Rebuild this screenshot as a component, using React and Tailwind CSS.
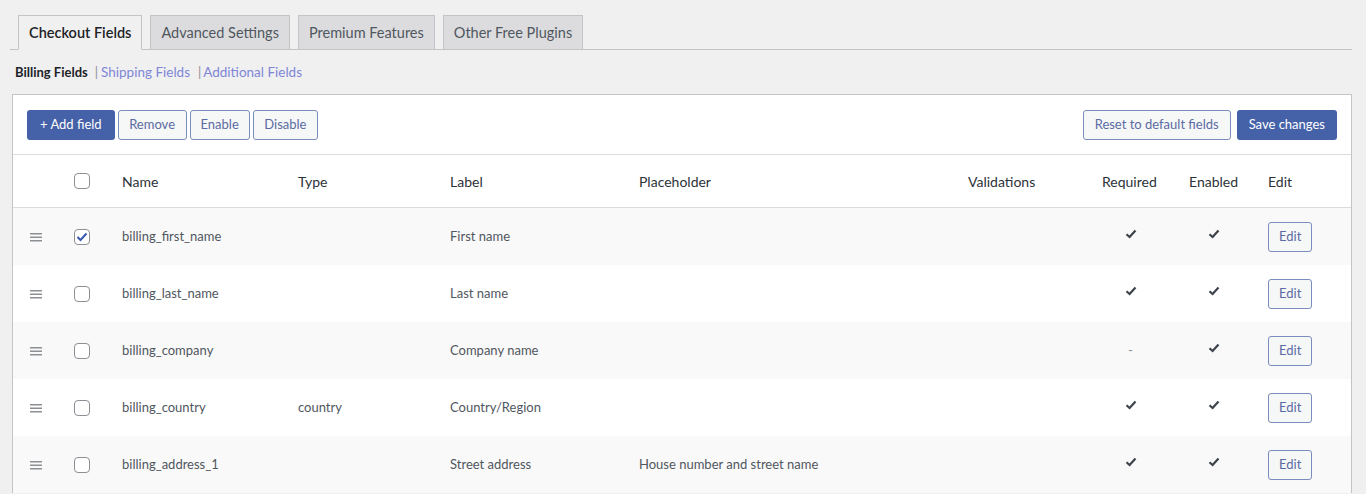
const FONT = { fontFamily: 'Lato, "Open Sans", sans-serif' };

const tabs = ['Checkout Fields', 'Advanced Settings', 'Premium Features', 'Other Free Plugins'];

const rows = [
  { name: 'billing_first_name', type: '', label: 'First name', placeholder: '', required: true, checked: true },
  { name: 'billing_last_name', type: '', label: 'Last name', placeholder: '', required: true },
  { name: 'billing_company', type: '', label: 'Company name', placeholder: '', required: false },
  { name: 'billing_country', type: 'country', label: 'Country/Region', placeholder: '', required: true },
  { name: 'billing_address_1', type: '', label: 'Street address', placeholder: 'House number and street name', required: true },
];

const cols = 'grid grid-cols-[61px_48px_176px_152px_189px_329px_134px_87px_79px_1fr] items-center';

function Tick() {
  return (
    <svg width="12" height="10" viewBox="0 0 12 10">
      <path d="M1.5 5.2 L4.6 8 L10.5 1.5" fill="none" stroke="#3c434a" strokeWidth="2.2" />
    </svg>
  );
}

function Handle() {
  return (
    <svg width="12" height="9" viewBox="0 0 12 9">
      <rect x="0" y="0" width="12" height="1.5" fill="#8c8f94" />
      <rect x="0" y="3.5" width="12" height="1.5" fill="#8c8f94" />
      <rect x="0" y="7" width="12" height="1.5" fill="#8c8f94" />
    </svg>
  );
}

function Box({ checked }) {
  return (
    <span className="w-4 h-4 rounded-[4px] border border-[#8c8f94] bg-white flex items-center justify-center">
      {checked && (
        <svg width="12" height="10" viewBox="0 0 12 10">
          <path d="M1.5 5 L4.5 8 L10.5 1.5" fill="none" stroke="#3858b0" strokeWidth="2" />
        </svg>
      )}
    </span>
  );
}

function OutlineBtn({ children, className = 'px-[10px]' }) {
  return (
    <button className={`h-[30px] rounded-[3px] border border-[#7b8dbf] bg-[#f6f7f7] text-[13px] text-[#5b6ba3] ${className}`}>
      {children}
    </button>
  );
}

export default function App() {
  return (
    <div className="min-h-screen bg-[#f0f0f1] pt-[15px] pl-[10px] pr-[14px] text-[#3c434a]" style={FONT}>
      {/* Tabs */}
      <div className="flex gap-[8px] pl-[8px] border-b border-[#c3c4c7]">
        {tabs.map((t, i) => (
          <div
            key={t}
            className={`h-[35px] px-[10px] flex items-center text-[14.5px] border border-[#c3c4c7] -mb-px ${
              i === 0 ? 'bg-[#f0f0f1] border-b-[#f0f0f1] text-[#1d2327] font-semibold' : 'bg-[#dcdcde] text-[#50575e]'
            }`}
          >
            {t}
          </div>
        ))}
      </div>

      {/* Sub nav */}
      <div className="flex items-center h-[44px] pt-[1px] pl-[5px] text-[13px]">
        <span className="font-bold text-[#1d2327]">Billing Fields</span>
        <span className="ml-[7px] mr-[3px] text-[#8c8f94]">|</span>
        <span className="text-[13.5px] text-[#7f86d6]">Shipping Fields</span>
        <span className="ml-[8px] mr-[2px] text-[#8c8f94]">|</span>
        <span className="text-[13.5px] text-[#7f86d6]">Additional Fields</span>
      </div>

      {/* Panel */}
      <div className="ml-[2px] bg-white border border-[#c3c4c7] border-b-0">
        <div className="h-[60px] flex items-center px-[14px] border-b border-[#dcdcde]">
          <div className="flex gap-[3px]">
            <button className="h-[30px] px-[13px] rounded-[3px] bg-[#4562a8] text-white text-[13px]">+ Add field</button>
            <OutlineBtn className="px-[10.5px]">Remove</OutlineBtn>
            <OutlineBtn>Enable</OutlineBtn>
            <OutlineBtn className="px-[10.5px]">Disable</OutlineBtn>
          </div>
          <div className="ml-auto flex gap-[6px]">
            <OutlineBtn className="px-[11px]">Reset to default fields</OutlineBtn>
            <button className="h-[30px] px-[12px] rounded-[3px] bg-[#4562a8] text-white text-[13px]">Save changes</button>
          </div>
        </div>

        <div className={`${cols} h-[53px] border-b border-[#dcdcde] text-[14px] text-[#2c3338]`}>
          <div />
          <div><Box /></div>
          <div>Name</div>
          <div>Type</div>
          <div>Label</div>
          <div>Placeholder</div>
          <div>Validations</div>
          <div>Required</div>
          <div>Enabled</div>
          <div>Edit</div>
        </div>

        {rows.map((r, i) => (
          <div key={r.name} className={`${cols} h-[57px] text-[13px] text-[#50575e] ${i % 2 === 0 ? 'bg-[#f9f9f9]' : 'bg-white'}`}>
            <div className="pl-[17px] pt-[1px]"><Handle /></div>
            <div><Box checked={r.checked} /></div>
            <div>{r.name}</div>
            <div>{r.type}</div>
            <div>{r.label}</div>
            <div>{r.placeholder}</div>
            <div />
            {r.required ? (
              <div className="pl-[23px] -mt-[6px]"><Tick /></div>
            ) : (
              <div className="pl-[26px] text-[#8c8f94]">-</div>
            )}
            <div className="pl-[19px] -mt-[6px]"><Tick /></div>
            <div><OutlineBtn className="px-[10px]">Edit</OutlineBtn></div>
          </div>
        ))}
      </div>
    </div>
  );
}
